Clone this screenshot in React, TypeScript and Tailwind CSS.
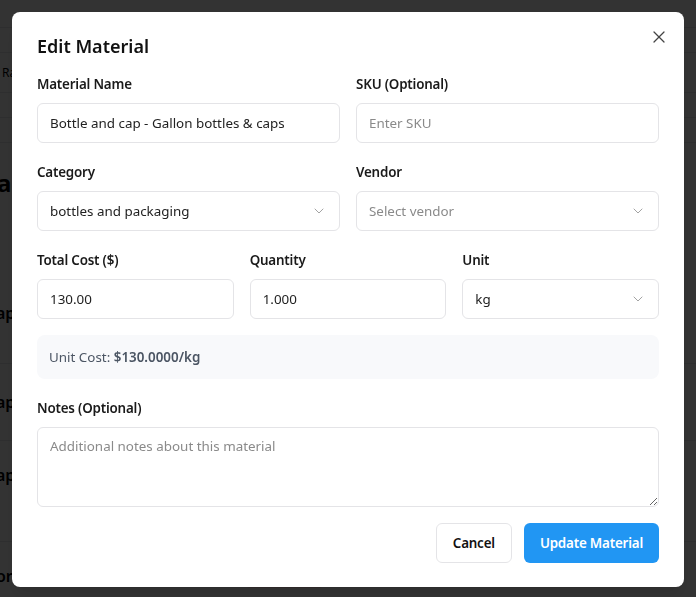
import { ChevronDown, X } from "lucide-react"

const font = { fontFamily: '"Noto Sans", "Open Sans", sans-serif' }

function Label({ children }: { children: React.ReactNode }) {
  return (
    <label className="mb-[9px] block text-[13.4px] leading-5 font-semibold tracking-[-0.2px] text-[#1a1a1a]">
      {children}
    </label>
  )
}

function TextInput({ value, placeholder }: { value?: string; placeholder?: string }) {
  return (
    <input
      readOnly
      value={value ?? ""}
      placeholder={placeholder}
      className="block h-10 w-full rounded-md border border-[#e4e4e7] bg-white px-3 text-[13.4px] text-[#222] outline-none placeholder:text-[#8a8a8a]"
    />
  )
}

function SelectBox({ value, placeholder }: { value?: string; placeholder?: string }) {
  return (
    <div className="flex h-10 w-full items-center justify-between rounded-md border border-[#e4e4e7] bg-white px-3 text-[13.4px]">
      {value ? <span className="text-[#222]">{value}</span> : <span className="text-[#8a8a8a]">{placeholder}</span>}
      <ChevronDown size={16} strokeWidth={1.5} className="text-[#a3a3a3]" />
    </div>
  )
}

function BackgroundPage() {
  return (
    <div className="min-h-[597px] bg-white text-black">
      <div className="h-[28px] border-b border-gray-200" />
      <div className="h-[25px] border-b border-gray-200" />
      <div className="flex h-[40px] items-center border-b border-gray-200 pl-[2px] text-xs">Raw...</div>
      <div className="h-[25px] border-b border-gray-200" />
      <div className="h-[25px] border-b border-gray-200" />
      <div className="flex h-[78px] items-center pt-[2px] text-2xl font-bold">
        <span className="-ml-[3px]">ar</span>
      </div>
      <div className="flex h-[143px] items-end border-b border-gray-200 pb-[38px] text-base font-semibold">
        <span className="-ml-[4px]">ap</span>
      </div>
      <div className="flex h-[77px] items-center border-b border-gray-200 text-base font-semibold">
        <span className="-ml-[4px]">ap</span>
      </div>
      <div className="flex h-[101px] items-start border-b border-gray-200 pt-[22px] text-base font-semibold">
        <span className="-ml-[4px]">ap</span>
      </div>
      <div className="flex items-start pt-[22px] text-base font-semibold">
        <span className="-ml-[4px] w-[250px]">or</span>
        <span className="mt-[8px] rounded bg-red-100 px-2 text-xs text-red-800">packaging</span>
      </div>
    </div>
  )
}

export default function App() {
  return (
    <div style={font} className="relative h-[597px] w-[696px] overflow-hidden">
      <BackgroundPage />
      <div className="fixed inset-0 bg-black/80" />
      <div className="fixed inset-0 flex items-start justify-center pt-3">
        <div className="relative w-[672px] rounded-lg bg-white px-[25px] pt-5 pb-6 shadow-lg">
          <button className="absolute top-[15px] right-[15px] text-[#444]">
            <X size={20} strokeWidth={1.5} />
          </button>
          <h2 className="text-[18px] leading-7 font-semibold text-[#111]">Edit Material</h2>

          <div className="mt-[14px] grid grid-cols-2 gap-x-4 gap-y-[19px]">
            <div>
              <Label>Material Name</Label>
              <TextInput value="Bottle and cap - Gallon bottles & caps" />
            </div>
            <div>
              <Label>SKU (Optional)</Label>
              <TextInput placeholder="Enter SKU" />
            </div>
            <div>
              <Label>Category</Label>
              <SelectBox value="bottles and packaging" />
            </div>
            <div>
              <Label>Vendor</Label>
              <SelectBox placeholder="Select vendor" />
            </div>
          </div>

          <div className="mt-[19px] grid grid-cols-3 gap-4">
            <div>
              <Label>Total Cost ($)</Label>
              <TextInput value="130.00" />
            </div>
            <div>
              <Label>Quantity</Label>
              <TextInput value="1.000" />
            </div>
            <div>
              <Label>Unit</Label>
              <SelectBox value="kg" />
            </div>
          </div>

          <div className="mt-4 flex h-[44px] items-center rounded-lg bg-[#f8f9fb] px-3 text-[13.4px] text-[#4b5563]">
            Unit Cost:&nbsp;<span className="font-semibold">$130.0000/kg</span>
          </div>

          <div className="mt-[19px]">
            <Label>Notes (Optional)</Label>
            <textarea
              readOnly
              placeholder="Additional notes about this material"
              className="block h-20 w-full resize-y rounded-md border border-[#e4e4e7] px-3 py-2 text-[13.4px] outline-none placeholder:text-[#8a8a8a]"
            />
          </div>

          <div className="mt-4 flex justify-end gap-3">
            <button className="h-10 rounded-md border border-[#e4e4e7] bg-white px-4 text-[13.4px] font-semibold tracking-[-0.2px] text-[#111]">
              Cancel
            </button>
            <button className="h-10 rounded-md bg-[#2196f3] px-4 text-[13.4px] font-semibold tracking-[-0.2px] text-white">
              Update Material
            </button>
          </div>
        </div>
      </div>
    </div>
  )
}
